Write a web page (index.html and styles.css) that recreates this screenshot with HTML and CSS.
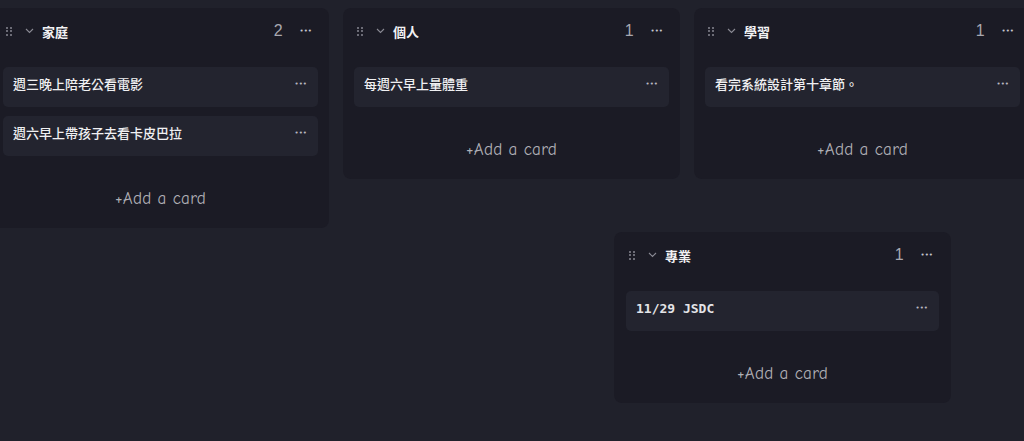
FILE: index.html
```html
<!DOCTYPE html>
<html lang="zh-Hant">
<head>
    <meta charset="UTF-8">
    <title>Kanban</title>
    <meta name="viewport" content="width=device-width, initial-scale=1.0">
    <link rel="stylesheet" href="styles.css">
</head>
<body>

    <div class="board">
        <div class="row">
            <div class="column">
                <div class="column-header">
                    <span class="drag"><i></i><i></i><i></i><i></i><i></i><i></i></span>
                    <svg class="chevron" width="9" height="6" viewBox="0 0 9 6"><path d="M1 1 L4.5 4.5 L8 1" fill="none" stroke="#8a8a94" stroke-width="1.1"/></svg>
                    <span class="title">家庭</span>
                    <span class="count">2</span>
                    <span class="more">•••</span>
                </div>
                <div class="cards">
                    <div class="card"><span>週三晚上陪老公看電影</span><span class="more small">•••</span></div>
                    <div class="card"><span>週六早上帶孩子去看卡皮巴拉</span><span class="more small">•••</span></div>
                </div>
                <div class="add-card">+Add a card</div>
            </div>

            <div class="column">
                <div class="column-header">
                    <span class="drag"><i></i><i></i><i></i><i></i><i></i><i></i></span>
                    <svg class="chevron" width="9" height="6" viewBox="0 0 9 6"><path d="M1 1 L4.5 4.5 L8 1" fill="none" stroke="#8a8a94" stroke-width="1.1"/></svg>
                    <span class="title">個人</span>
                    <span class="count">1</span>
                    <span class="more">•••</span>
                </div>
                <div class="cards">
                    <div class="card"><span>每週六早上量體重</span><span class="more small">•••</span></div>
                </div>
                <div class="add-card">+Add a card</div>
            </div>

            <div class="column">
                <div class="column-header">
                    <span class="drag"><i></i><i></i><i></i><i></i><i></i><i></i></span>
                    <svg class="chevron" width="9" height="6" viewBox="0 0 9 6"><path d="M1 1 L4.5 4.5 L8 1" fill="none" stroke="#8a8a94" stroke-width="1.1"/></svg>
                    <span class="title">學習</span>
                    <span class="count">1</span>
                    <span class="more">•••</span>
                </div>
                <div class="cards">
                    <div class="card"><span>看完系統設計第十章節。</span><span class="more small">•••</span></div>
                </div>
                <div class="add-card">+Add a card</div>
            </div>
        </div>

        <div class="row row-lower">
            <div class="column column-wide">
                <div class="column-header">
                    <span class="drag"><i></i><i></i><i></i><i></i><i></i><i></i></span>
                    <svg class="chevron" width="9" height="6" viewBox="0 0 9 6"><path d="M1 1 L4.5 4.5 L8 1" fill="none" stroke="#8a8a94" stroke-width="1.1"/></svg>
                    <span class="title">專業</span>
                    <span class="count">1</span>
                    <span class="more">•••</span>
                </div>
                <div class="cards">
                    <div class="card"><span class="mono">11/29 JSDC</span><span class="more small">•••</span></div>
                </div>
                <div class="add-card">+Add a card</div>
            </div>
        </div>
    </div>

</body>
</html>
```

FILE: styles.css
```css
* {
    margin: 0;
    padding: 0;
    box-sizing: border-box;
}

body {
    font-family: "Noto Sans", "Noto Sans CJK TC", sans-serif;
    background-color: #20212b;
    color: #f0f0f2;
    overflow: hidden;
}

.board {
    padding-top: 8px;
}

.row {
    display: flex;
    gap: 14px;
    margin-left: -8px;
    align-items: flex-start;
}

.row-lower {
    margin-top: 4px;
    margin-left: 614px;
}

.column {
    flex: 0 0 337px;
    width: 337px;
    background-color: #1b1b25;
    border-radius: 8px;
    padding: 11px 11px 0 11px;
}

.column-wide {
    padding: 11px 12px 0 12px;
}

.column-header {
    display: flex;
    align-items: center;
    height: 24px;
    padding-left: 3px;
    padding-right: 6px;
}

.drag {
    display: grid;
    grid-template-columns: 2px 2px;
    gap: 1.5px 2px;
    width: 6px;
}

.drag i {
    display: block;
    width: 2px;
    height: 2px;
    background-color: #6c6c76;
}

.chevron {
    margin-left: 13px;
}

.title {
    margin-left: 8px;
    font-size: 13px;
    font-weight: bold;
    color: #f2f2f4;
}

.count {
    margin-left: auto;
    font-family: "Liberation Sans", sans-serif;
    font-size: 16px;
    color: #a8a8b0;
}

.more {
    margin-left: 17px;
    font-family: "DejaVu Sans", sans-serif;
    font-size: 7px;
    color: #c4c4cc;
}

.cards {
    margin-top: 24px;
    display: flex;
    flex-direction: column;
    gap: 9px;
}

.card {
    display: flex;
    justify-content: space-between;
    align-items: flex-start;
    height: 40px;
    padding: 7px 11px 0 10px;
    background-color: #23242f;
    border-radius: 5px;
    font-size: 13px;
    font-weight: 500;
    color: #f0f0f2;
}

.card .more.small {
    margin-top: 6px;
    color: #b8b8c0;
}

.mono {
    padding-top: 3px;
    font-family: "DejaVu Sans Mono", monospace;
    font-weight: bold;
    color: #e4e4e8;
}

.add-card {
    margin-top: 12px;
    height: 60px;
    display: flex;
    align-items: center;
    justify-content: center;
    font-family: "Comic Sans MS", "Comic Neue", cursive;
    font-size: 17px;
    letter-spacing: 0.3px;
    color: #b0b0b6;
}
```
